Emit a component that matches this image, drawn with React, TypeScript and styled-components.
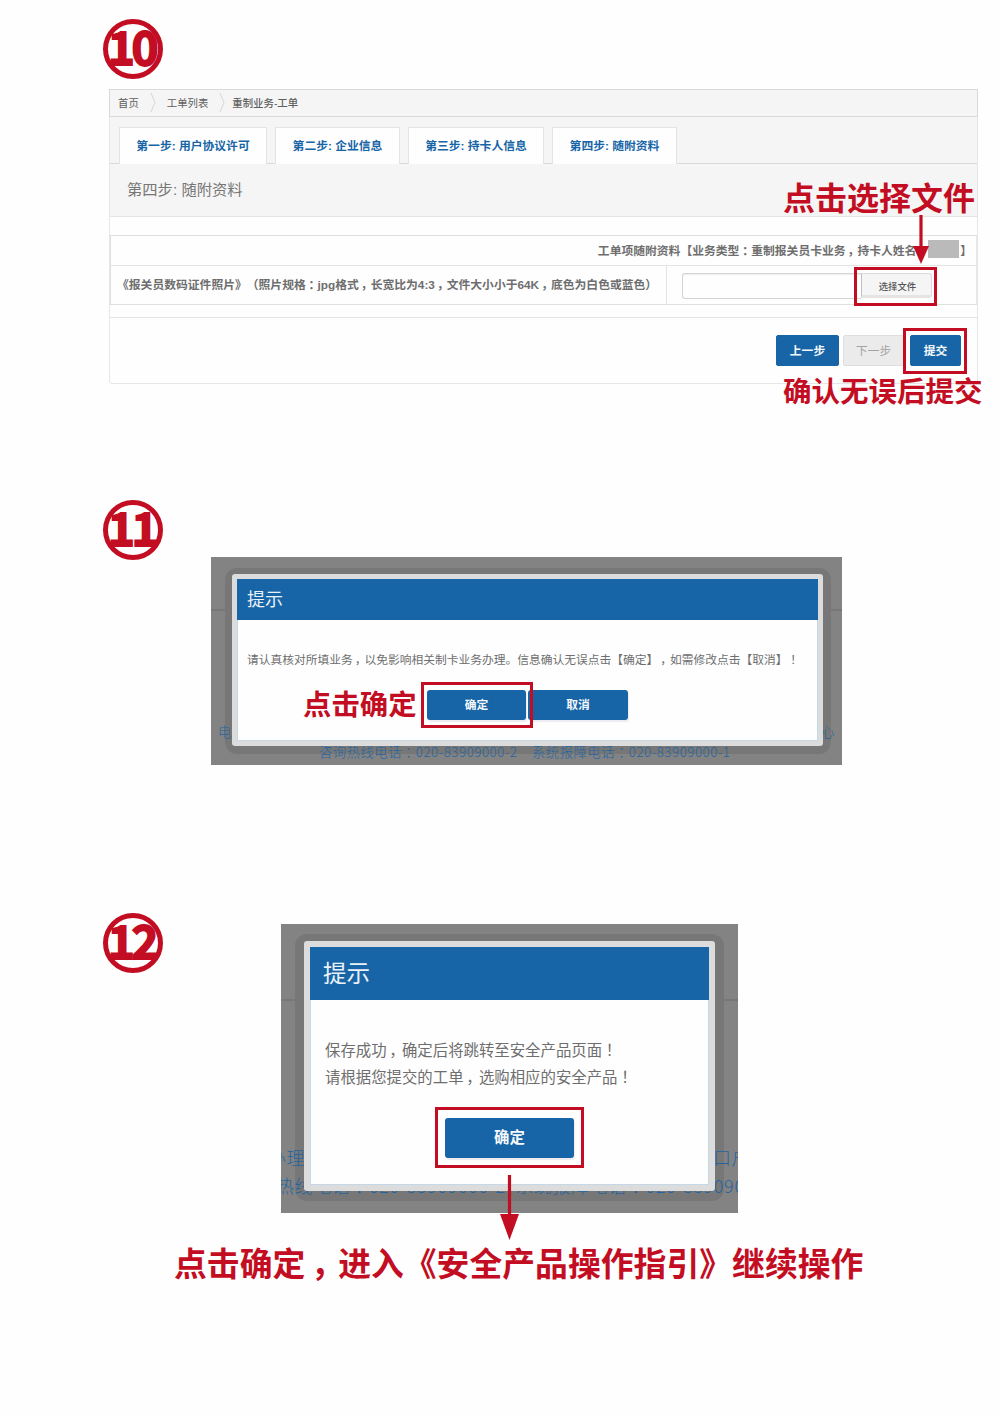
import React from "react";
import styled, { createGlobalStyle } from "styled-components";

const RED = "#c30d23";
const BLUE = "#1765a7";
const SANS = `"Liberation Sans", "Noto Sans CJK SC", sans-serif`;

const GlobalStyle = createGlobalStyle`
  * { box-sizing: border-box; }
  body { margin: 0; background: #fefefe; }
`;

const Page = styled.main`
  display: flex;
  flex-direction: column;
  width: 1000px;
  height: 1415px;
  padding-top: 19px;
  overflow: hidden;
  font-family: ${SANS};
  font-size: 11.8px;
  color: #6e6e6e;
  white-space: nowrap;
  text-spacing-trim: space-all;
`;

const Step = styled.section<{ $height: number; $column?: boolean }>`
  position: relative;
  display: flex;
  flex-direction: ${(p) => (p.$column ? "column" : "row")};
  align-items: flex-start;
  height: ${(p) => p.$height}px;
  padding-left: 103px;
  flex: none;
`;

const Badge = styled.div`
  display: flex;
  align-items: center;
  justify-content: center;
  flex: none;
  width: 60px;
  height: 60px;
  padding-bottom: 8px;
  border: 5px solid ${RED};
  border-radius: 50%;
  color: ${RED};
  font: 700 46px/42px "Noto Sans CJK SC", sans-serif;
  letter-spacing: -3.5px;
  text-indent: -3px;
  -webkit-text-stroke: 1.8px ${RED};
`;

/* Full-width punctuation that sits in the middle of its cell. */
const Mid = styled.span<{ $lead: number }>`
  margin: 0 ${(p) => 0.5 - p.$lead}em 0 ${(p) => p.$lead}em;
  font-family: "Noto Sans CJK SC", sans-serif;
  font-feature-settings: "halt" 1;
  line-height: 1;
`;

const Prose = ({ children }: { children: string }) => (
  <>
    {children.split(/([，：！])/).map((part, i) =>
      i % 2 ? <Mid key={i} $lead={part === "，" ? 0.17 : 0.24}>{part}</Mid> : part
    )}
  </>
);

/* ---------- step 10 : form panel ---------- */

const Panel = styled.div`
  display: flex;
  flex-direction: column;
  width: 869px;
  height: 295px;
  margin: 10px 0 0 6px;
  border: 1px solid #e6e6e6;
  border-radius: 0 0 3px 3px;
  background: #fefefe;

  > * { flex: none; }
`;

const Crumbs = styled.nav`
  display: flex;
  align-items: center;
  height: 28px;
  margin: 0 -1px;
  margin-top: -1px;
  padding: 0 0 1px 8px;
  border: 1px solid #d9d9d9;
  background: #f5f5f5;
  font-size: 10.4px;
  color: #606060;
`;

const Crumb = styled.span<{ $current?: boolean }>`
  font-weight: ${(p) => (p.$current ? 500 : 400)};
`;

const Chevron = styled.svg<{ $after: number }>`
  width: 6px;
  height: 21px;
  margin: 0 ${(p) => p.$after}px 0 11px;
  fill: none;
  stroke: #d6d6d6;
`;

const Tabs = styled.div`
  display: flex;
  align-items: flex-end;
  gap: 8px;
  height: 47px;
  padding-left: 9px;
  background: #f5f5f5;
  border-bottom: 1px solid #d9d9d9;
`;

const Tab = styled.div<{ $width: number }>`
  width: ${(p) => p.$width}px;
  height: 37px;
  margin-bottom: -1px;
  border: 1px solid #e4e4e4;
  border-bottom: 0;
  background: #fefefe;
  color: ${BLUE};
  font-weight: 700;
  line-height: 36px;
  text-align: center;
`;

const PanelTitle = styled.h2`
  height: 53px;
  margin: 0;
  padding-left: 17px;
  border-bottom: 1px solid #e4e4e4;
  background: #f5f5f5;
  font-size: 15.3px;
  font-weight: 400;
  line-height: 52px;
  color: #777;
`;

const Table = styled.div`
  margin-top: 18px;
  border: 1px solid #e0e0e0;
  border-right-color: #e8e8e8;
  font-weight: 700;
`;

const HeadRow = styled.div`
  display: flex;
  align-items: center;
  justify-content: flex-end;
  height: 30px;
  padding-right: 4px;
  border-bottom: 1px solid #e4e4e4;
  line-height: 28px;
`;

const Redacted = styled.span`
  width: 31px;
  height: 18px;
  margin: -3px 0 0;
  background: #bababa;
`;

const CloseBracket = styled.span`
  margin-left: 1px;
`;

const FieldRow = styled.div`
  display: flex;
  height: 38px;
`;

const FieldLabel = styled.div`
  width: 556px;
  padding-left: 6px;
  border-right: 1px solid #e4e4e4;
  line-height: 39px;
`;

const FieldValue = styled.div`
  display: flex;
  align-items: flex-start;
  padding: 7px 0 0 15px;
`;

const FileBox = styled.div`
  width: 179px;
  height: 26px;
  border: 1px solid #d4d4d4;
  border-right: 0;
  border-radius: 3px 0 0 3px;
  box-shadow: inset 0 1px 1px #eee;
`;

const FileButton = styled.div`
  width: 71px;
  height: 25px;
  border: 1px solid #dadada;
  border-left-color: #c0c0c0;
  border-bottom: 3px solid #e4e4e4;
  border-radius: 0 3px 3px 0;
  background: #f5f5f5;
  font-size: 9.4px;
  font-weight: 500;
  color: #555;
  line-height: 25px;
  text-align: center;
  text-indent: 2px;
`;

const PanelFooter = styled.div`
  display: flex;
  height: 66px;
  margin-top: 12px;
  padding: 17px 0 0 666px;
  border-top: 1px solid #e4e4e4;
`;

const StepButton = styled.div<{ $width: number; $disabled?: boolean }>`
  width: ${(p) => p.$width}px;
  height: 31px;
  margin-right: ${(p) => (p.$disabled ? 6 : 4)}px;
  border: 1px solid ${(p) => (p.$disabled ? "#dedede" : BLUE)};
  border-radius: 2px;
  background: ${(p) => (p.$disabled ? "#ebebeb" : BLUE)};
  color: ${(p) => (p.$disabled ? "#a3a3a3" : "#f4f8fb")};
  font-weight: ${(p) => (p.$disabled ? 400 : 700)};
  line-height: 30px;
  text-align: center;
`;

/* ---------- steps 11 and 12 : dialogs ---------- */

const Backdrop = styled.div<{ $width: number; $height: number; $left: number; $top: number; $pad: string }>`
  position: relative;
  flex: none;
  display: flex;
  width: ${(p) => p.$width}px;
  height: ${(p) => p.$height}px;
  margin: ${(p) => p.$top}px 0 0 ${(p) => p.$left}px;
  padding: ${(p) => p.$pad};
  overflow: hidden;
  background: #838383;
`;

const Shade = styled.div<{ $pad: string }>`
  display: flex;
  flex: 1;
  padding: ${(p) => p.$pad};
  border-radius: 12px;
  background: #777;
`;

const Frame = styled.div<{ $edge: number }>`
  position: relative;
  display: flex;
  flex-direction: column;
  flex: 1;
  padding: ${(p) => p.$edge}px;
  border-radius: 3px;
  background: #dcdcdc;
`;

const DialogTitle = styled.h3<{ $height: number; $size: number; $indent: number }>`
  height: ${(p) => p.$height}px;
  margin: 0;
  padding: 1px 0 0 ${(p) => p.$indent}px;
  background: ${BLUE};
  color: #eaf1f7;
  font-size: ${(p) => p.$size}px;
  font-weight: 400;
  line-height: ${(p) => p.$height}px;
`;

const DialogBody = styled.div<{ $pad: string; $size: number }>`
  flex: 1;
  padding: ${(p) => p.$pad};
  border: 1px solid #c5d8e8;
  border-top: 0;
  background: #fefefe;
  font-size: ${(p) => p.$size}px;
`;

const Sentence = styled.p<{ $line: number }>`
  height: ${(p) => p.$line}px;
  margin: 0;
  line-height: ${(p) => p.$line}px;
`;

const Actions = styled.div<{ $top: number; $left: number }>`
  display: flex;
  gap: 2px;
  margin: ${(p) => p.$top}px 0 0 ${(p) => p.$left}px;
`;

const DialogButton = styled.div<{ $width: number; $height: number }>`
  width: ${(p) => p.$width}px;
  height: ${(p) => p.$height}px;
  border-radius: 3px;
  background: ${BLUE};
  box-shadow: 1px 2px 1px #ececf2;
  color: #f4f8fb;
  font-weight: 700;
  line-height: ${(p) => p.$height}px;
  text-align: center;
`;

/* Remains of the page that shows round the dialog. */
const Behind = styled.span<{ $left: number; $top: number; $size: number }>`
  position: absolute;
  left: ${(p) => p.$left}px;
  top: ${(p) => p.$top}px;
  color: #2465a0;
  font-family: "Noto Sans CJK SC", sans-serif;
  font-size: ${(p) => p.$size}px;
  font-weight: 300;
  letter-spacing: 0.04em;
  line-height: 20px;
  white-space: pre;
`;

const BehindRule = styled.i<{ $side: "left" | "right"; $top: number }>`
  position: absolute;
  ${(p) => p.$side}: 0;
  top: ${(p) => p.$top}px;
  width: 15px;
  height: 2px;
  background: #777;
`;

/* ---------- red annotations ---------- */

const Highlight = styled.div<{ $x: number; $y: number; $w: number; $h: number }>`
  position: absolute;
  left: ${(p) => p.$x}px;
  top: ${(p) => p.$y}px;
  width: ${(p) => p.$w}px;
  height: ${(p) => p.$h}px;
  border: 3px solid ${RED};
`;

const Note = styled.div<{ $x: number; $y: number; $size: number }>`
  position: absolute;
  left: ${(p) => p.$x}px;
  top: ${(p) => p.$y}px;
  color: ${RED};
  font-size: ${(p) => p.$size}px;
  font-weight: 700;
  line-height: 40px;
`;

const ArrowSvg = styled.svg<{ $x: number; $y: number }>`
  position: absolute;
  left: ${(p) => p.$x}px;
  top: ${(p) => p.$y}px;
  fill: ${RED};
`;

const Arrow = ({ x, y, shaft, head, width }: { x: number; y: number; shaft: number; head: number; width: number }) => (
  <ArrowSvg $x={x} $y={y} width={width} height={shaft + head}>
    <rect x={width / 2 - 1.6} y="0" width="3.2" height={shaft + 1} />
    <polygon points={`0,${shaft} ${width},${shaft} ${width / 2},${shaft + head}`} />
  </ArrowSvg>
);

const Conclusion = styled.p`
  margin: 0;
  padding: 1px 0 0 174px;
  color: ${RED};
  font-size: 32.85px;
  font-weight: 700;
  line-height: 48px;
`;

const Divider = ({ after }: { after: number }) => (
  <Chevron $after={after} viewBox="0 0 6 21">
    <path d="M1 1 L5 10.5 L1 20" />
  </Chevron>
);

const tabs = [
  { label: "第一步: 用户协议许可", width: 148 },
  { label: "第二步: 企业信息", width: 125 },
  { label: "第三步: 持卡人信息", width: 136 },
  { label: "第四步: 随附资料", width: 125 },
];

export default function App() {
  return (
    <Page>
      <GlobalStyle />

      <Step $height={481} $column>
        <Badge>10</Badge>
        <Panel>
          <Crumbs>
            <Crumb>首页</Crumb>
            <Divider after={11} />
            <Crumb>工单列表</Crumb>
            <Divider after={7} />
            <Crumb $current>重制业务-工单</Crumb>
          </Crumbs>
          <Tabs>
            {tabs.map((t) => (
              <Tab key={t.label} $width={t.width}>{t.label}</Tab>
            ))}
          </Tabs>
          <PanelTitle>第四步: 随附资料</PanelTitle>
          <Table>
            <HeadRow>
              <span><Prose>工单项随附资料【业务类型：重制报关员卡业务，持卡人姓名：</Prose></span>
              <Redacted />
              <CloseBracket>】</CloseBracket>
            </HeadRow>
            <FieldRow>
              <FieldLabel>
                <Prose>《报关员数码证件照片》（照片规格：jpg格式，长宽比为4:3，文件大小小于64K，底色为白色或蓝色）</Prose>
              </FieldLabel>
              <FieldValue>
                <FileBox />
                <FileButton>选择文件</FileButton>
              </FieldValue>
            </FieldRow>
          </Table>
          <PanelFooter>
            <StepButton $width={63}>上一步</StepButton>
            <StepButton $width={61} $disabled>下一步</StepButton>
            <StepButton $width={51}>提交</StepButton>
          </PanelFooter>
        </Panel>
        <Note $x={783} $y={160} $size={32}>点击选择文件</Note>
        <Arrow x={913} y={196} shaft={31} head={18} width={16} />
        <Highlight $x={854} $y={248} $w={83} $h={39} />
        <Highlight $x={903} $y={309} $w={64} $h={46} />
        <Note $x={783} $y={353} $size={28.5}>确认无误后提交</Note>
      </Step>

      <Step $height={413}>
        <Badge>11</Badge>
        <Backdrop $width={631} $height={208} $left={48} $top={57} $pad="11px 11px 11px 14px">
          <BehindRule $side="left" $top={52} />
          <BehindRule $side="right" $top={52} />
          <Shade $pad="6px 8px 8px 7px">
            <Behind $left={7} $top={165} $size={13.3}>电</Behind>
            <Behind $left={610} $top={165} $size={13.3}>心</Behind>
            <Behind $left={108} $top={185} $size={13.3}><Prose>咨询热线电话：020-83909000-2</Prose></Behind>
            <Behind $left={321} $top={185} $size={13.3}><Prose>系统报障电话：020-83909000-1</Prose></Behind>
            <Frame $edge={5}>
              <DialogTitle $height={41} $size={18} $indent={10}>提示</DialogTitle>
              <DialogBody $pad="30px 0 0 9px" $size={11.75}>
                <Sentence $line={20}>
                  <Prose>请认真核对所填业务，以免影响相关制卡业务办理。信息确认无误点击【确定】，如需修改点击【取消】！</Prose>
                </Sentence>
                <Actions $top={20} $left={180}>
                  <DialogButton $width={99} $height={30}>确定</DialogButton>
                  <DialogButton $width={100} $height={30}>取消</DialogButton>
                </Actions>
              </DialogBody>
            </Frame>
          </Shade>
        </Backdrop>
        <Note $x={303} $y={185} $size={28.4}>点击确定</Note>
        <Highlight $x={421} $y={182} $w={112} $h={46} />
      </Step>

      <Step $height={327}>
        <Badge>12</Badge>
        <Backdrop $width={457} $height={289} $left={118} $top={11} $pad="10px 14px 12px 14px">
          <BehindRule $side="left" $top={75} />
          <BehindRule $side="right" $top={75} />
          <Shade $pad="7px 9px 10px 9px">
            <Behind $left={-13} $top={223} $size={17.9}>办理</Behind>
            <Behind $left={432} $top={223} $size={17.9}>口户</Behind>
            <Behind $left={-5} $top={251} $size={17.9}><Prose>热线电话：020-83909000-2  系统报障电话：020-83909000</Prose></Behind>
            <Frame $edge={6}>
              <DialogTitle $height={53} $size={23.6} $indent={13}>提示</DialogTitle>
              <DialogBody $pad="37px 0 0 14px" $size={15.4}>
                <Sentence $line={27}><Prose>保存成功，确定后将跳转至安全产品页面！</Prose></Sentence>
                <Sentence $line={27}><Prose>请根据您提交的工单，选购相应的安全产品！</Prose></Sentence>
                <Actions $top={27} $left={120}>
                  <DialogButton $width={129} $height={40}>确定</DialogButton>
                </Actions>
              </DialogBody>
            </Frame>
          </Shade>
        </Backdrop>
        <Highlight $x={435} $y={194} $w={149} $h={61} />
        <Arrow x={500} y={262} shaft={39} head={26} width={19} />
      </Step>

      <Conclusion><Prose>点击确定，进入《安全产品操作指引》继续操作</Prose></Conclusion>
    </Page>
  );
}
